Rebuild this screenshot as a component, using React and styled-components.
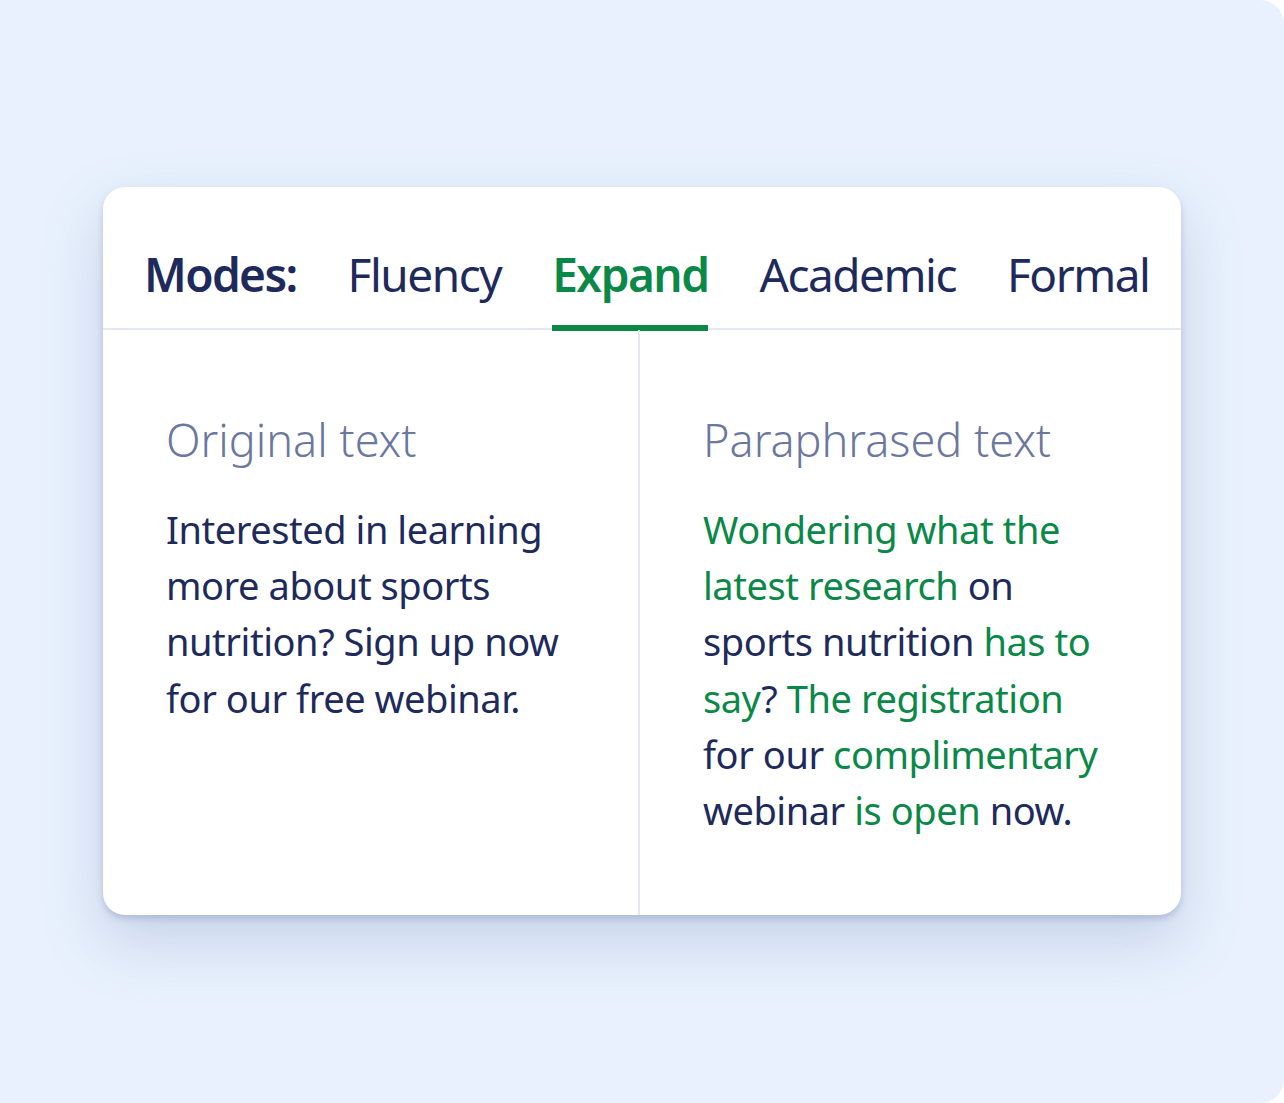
import React from "react";
import styled, { createGlobalStyle } from "styled-components";

const GlobalStyle = createGlobalStyle`
  html, body {
    margin: 0;
    padding: 0;
    background: #ffffff;
  }
  body {
    font-family: "Noto Sans", "Open Sans", sans-serif;
  }
`;

const Page = styled.div`
  box-sizing: border-box;
  width: 1284px;
  height: 1103px;
  padding: 187px 0 0 103px;
  background: #e8f1fd;
  border-radius: 0 24px 24px 0;
  overflow: hidden;
`;

const Card = styled.div`
  box-sizing: border-box;
  width: 1078px;
  height: 728px;
  background: #ffffff;
  border-radius: 22px;
  box-shadow: 0 4px 6px rgba(120, 138, 180, 0.35),
    0 26px 60px rgba(110, 130, 180, 0.28);
  display: flex;
  flex-direction: column;
  overflow: hidden;
`;

const Header = styled.div`
  display: flex;
  align-items: flex-end;
  gap: 51px;
  padding: 64px 0 0 41px;
  border-bottom: 2px solid #e5e8ee;
`;

const Tab = styled.div`
  font-size: 46px;
  line-height: 1;
  letter-spacing: ${(p) => (p.$label ? "-1.6px" : "-1.5px")};
  font-weight: ${(p) => (p.$label || p.$active ? 600 : 400)};
  color: ${(p) => (p.$active ? "#0a8848" : "#1e2a5c")};
  padding-bottom: 28px;
  border-bottom: 6px solid ${(p) => (p.$active ? "#0a8848" : "transparent")};
  margin-bottom: -3px;
  white-space: nowrap;
`;

const Body = styled.div`
  flex: 1;
  display: grid;
  grid-template-columns: 537px 1fr;
`;

const Column = styled.div`
  padding: 80px 40px 0 63px;
  border-right: ${(p) => (p.$divider ? "2px solid #e5e8ee" : "none")};
`;

const Heading = styled.h2`
  margin: 0 0 31px;
  font-size: 45px;
  line-height: 60px;
  font-weight: 300;
  color: #6c779f;
`;

const Text = styled.p`
  margin: 0;
  font-size: 38px;
  line-height: 56.2px;
  letter-spacing: -0.45px;
  font-weight: 400;
  color: #1e2a5c;
`;

const Changed = styled.span`
  color: #0a8848;
`;

const modes = ["Fluency", "Expand", "Academic", "Formal"];

export default function App() {
  return (
    <>
      <GlobalStyle />
      <Page>
        <Card>
          <Header>
            <Tab $label>Modes:</Tab>
            {modes.map((m) => (
              <Tab key={m} $active={m === "Expand"}>
                {m}
              </Tab>
            ))}
          </Header>
          <Body>
            <Column $divider>
              <Heading>Original text</Heading>
              <Text>
                Interested in learning
                <br />
                more about sports
                <br />
                nutrition? Sign up now
                <br />
                for our free webinar.
              </Text>
            </Column>
            <Column>
              <Heading>Paraphrased text</Heading>
              <Text>
                <Changed>Wondering what the</Changed>
                <br />
                <Changed>latest research</Changed> on
                <br />
                sports nutrition <Changed>has to</Changed>
                <br />
                <Changed>say</Changed>? <Changed>The registration</Changed>
                <br />
                for our <Changed>complimentary</Changed>
                <br />
                webinar <Changed>is open</Changed> now.
              </Text>
            </Column>
          </Body>
        </Card>
      </Page>
    </>
  );
}
